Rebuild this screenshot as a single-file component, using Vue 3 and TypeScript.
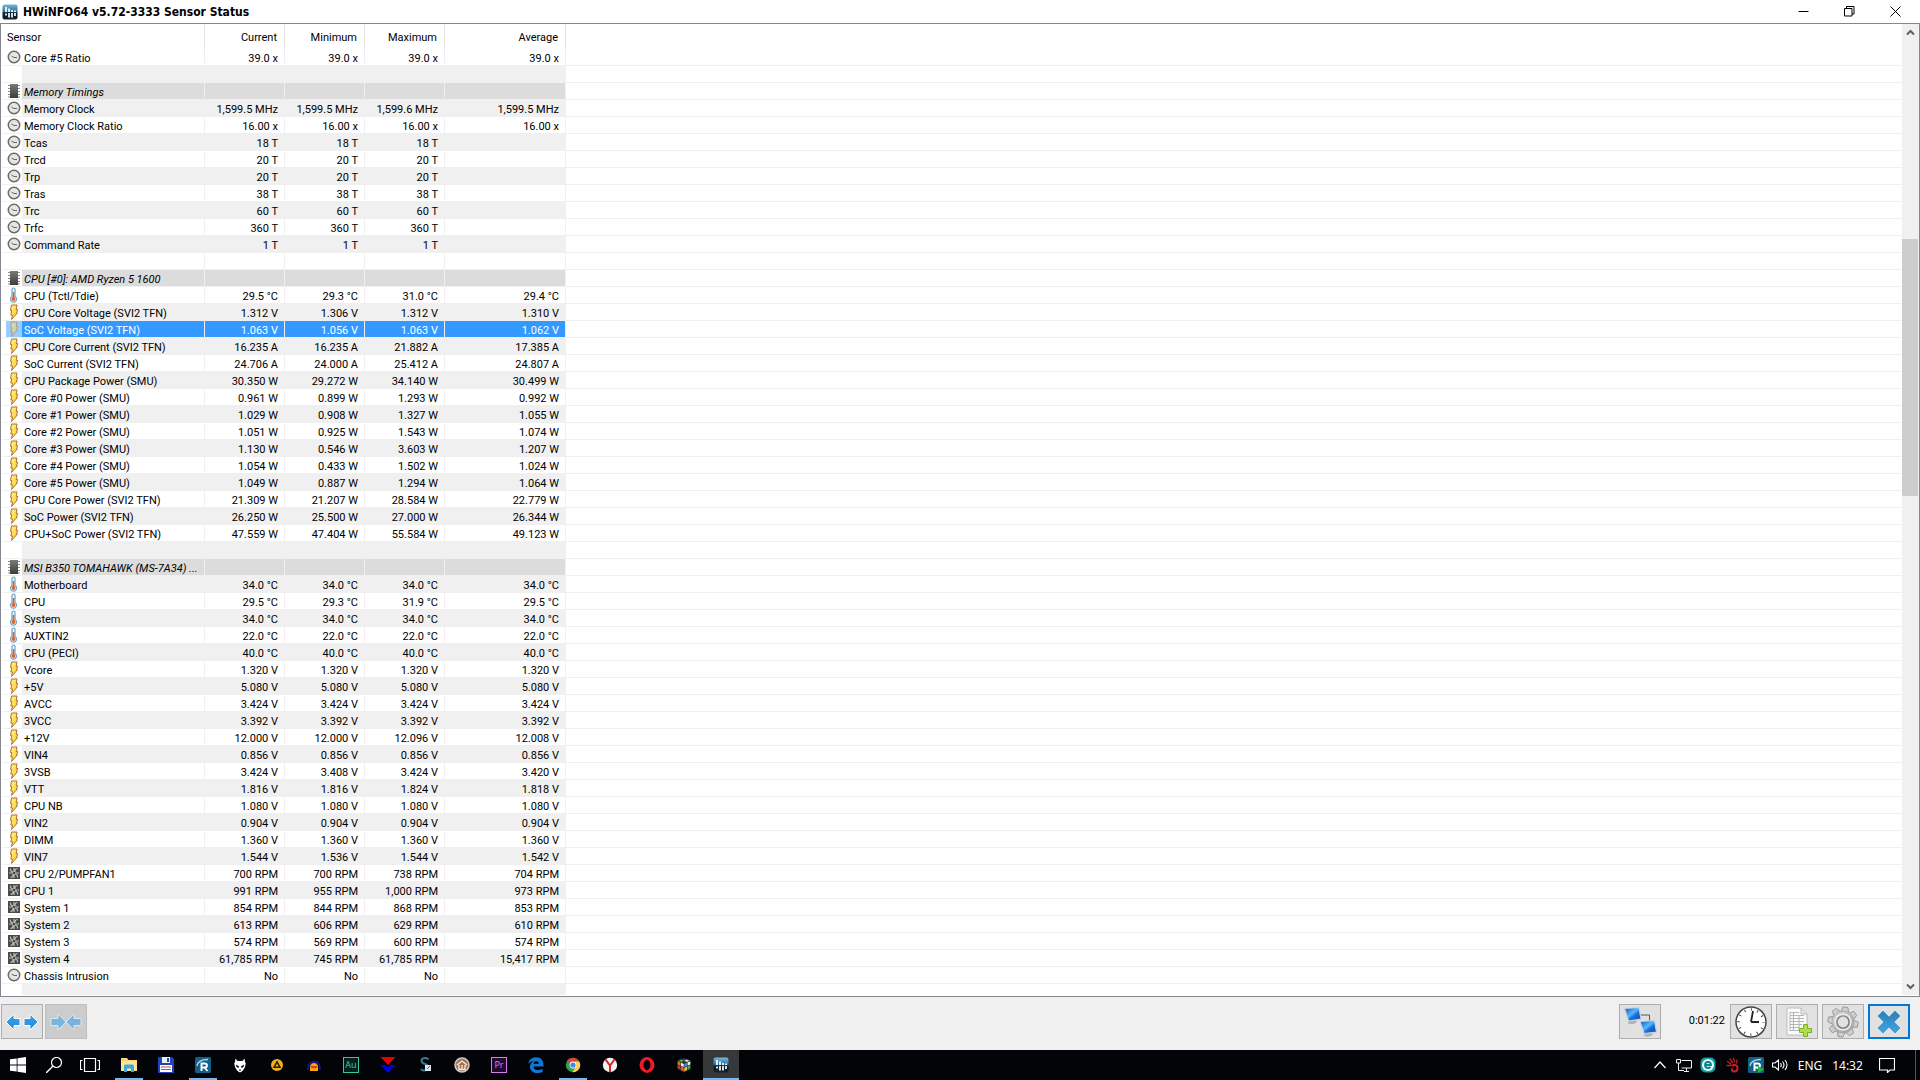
<script setup lang="ts">
interface Row {
  kind: 'clock' | 'chip' | 'temp' | 'bolt' | 'fan' | 'blank'
  name: string
  values: string[]
  selected?: boolean
}

const row = (kind: Row['kind'], name = '', values = ''): Row => ({
  kind,
  name,
  values: values ? values.split('|') : ['', '', '', ''],
})
const withUnit = (kind: Row['kind'], unit: string, name: string, values: string): Row =>
  row(kind, name, values.split(' ').map((v) => (v === '-' ? '' : `${v} ${unit}`)).join('|'))

const clock = (unit: string, name: string, values: string) => withUnit('clock', unit, name, values)
const temp = (name: string, values: string) => withUnit('temp', '°C', name, values)
const volt = (name: string, values: string) => withUnit('bolt', 'V', name, values)
const amp = (name: string, values: string) => withUnit('bolt', 'A', name, values)
const watt = (name: string, values: string) => withUnit('bolt', 'W', name, values)
const fan = (name: string, values: string) => withUnit('fan', 'RPM', name, values)

const rows: Row[] = [
  clock('x', 'Core #5 Ratio', '39.0 39.0 39.0 39.0'),
  row('blank'),
  row('chip', 'Memory Timings'),
  clock('MHz', 'Memory Clock', '1,599.5 1,599.5 1,599.6 1,599.5'),
  clock('x', 'Memory Clock Ratio', '16.00 16.00 16.00 16.00'),
  clock('T', 'Tcas', '18 18 18 -'),
  clock('T', 'Trcd', '20 20 20 -'),
  clock('T', 'Trp', '20 20 20 -'),
  clock('T', 'Tras', '38 38 38 -'),
  clock('T', 'Trc', '60 60 60 -'),
  clock('T', 'Trfc', '360 360 360 -'),
  clock('T', 'Command Rate', '1 1 1 -'),
  row('blank'),
  row('chip', 'CPU [#0]: AMD Ryzen 5 1600'),
  temp('CPU (Tctl/Tdie)', '29.5 29.3 31.0 29.4'),
  volt('CPU Core Voltage (SVI2 TFN)', '1.312 1.306 1.312 1.310'),
  { ...volt('SoC Voltage (SVI2 TFN)', '1.063 1.056 1.063 1.062'), selected: true },
  amp('CPU Core Current (SVI2 TFN)', '16.235 16.235 21.882 17.385'),
  amp('SoC Current (SVI2 TFN)', '24.706 24.000 25.412 24.807'),
  watt('CPU Package Power (SMU)', '30.350 29.272 34.140 30.499'),
  watt('Core #0 Power (SMU)', '0.961 0.899 1.293 0.992'),
  watt('Core #1 Power (SMU)', '1.029 0.908 1.327 1.055'),
  watt('Core #2 Power (SMU)', '1.051 0.925 1.543 1.074'),
  watt('Core #3 Power (SMU)', '1.130 0.546 3.603 1.207'),
  watt('Core #4 Power (SMU)', '1.054 0.433 1.502 1.024'),
  watt('Core #5 Power (SMU)', '1.049 0.887 1.294 1.064'),
  watt('CPU Core Power (SVI2 TFN)', '21.309 21.207 28.584 22.779'),
  watt('SoC Power (SVI2 TFN)', '26.250 25.500 27.000 26.344'),
  watt('CPU+SoC Power (SVI2 TFN)', '47.559 47.404 55.584 49.123'),
  row('blank'),
  row('chip', 'MSI B350 TOMAHAWK (MS-7A34) ...'),
  temp('Motherboard', '34.0 34.0 34.0 34.0'),
  temp('CPU', '29.5 29.3 31.9 29.5'),
  temp('System', '34.0 34.0 34.0 34.0'),
  temp('AUXTIN2', '22.0 22.0 22.0 22.0'),
  temp('CPU (PECI)', '40.0 40.0 40.0 40.0'),
  volt('Vcore', '1.320 1.320 1.320 1.320'),
  volt('+5V', '5.080 5.080 5.080 5.080'),
  volt('AVCC', '3.424 3.424 3.424 3.424'),
  volt('3VCC', '3.392 3.392 3.392 3.392'),
  volt('+12V', '12.000 12.000 12.096 12.008'),
  volt('VIN4', '0.856 0.856 0.856 0.856'),
  volt('3VSB', '3.424 3.408 3.424 3.420'),
  volt('VTT', '1.816 1.816 1.824 1.818'),
  volt('CPU NB', '1.080 1.080 1.080 1.080'),
  volt('VIN2', '0.904 0.904 0.904 0.904'),
  volt('DIMM', '1.360 1.360 1.360 1.360'),
  volt('VIN7', '1.544 1.536 1.544 1.542'),
  fan('CPU 2/PUMPFAN1', '700 700 738 704'),
  fan('CPU 1', '991 955 1,000 973'),
  fan('System 1', '854 844 868 853'),
  fan('System 2', '613 606 629 610'),
  fan('System 3', '574 569 600 574'),
  fan('System 4', '61,785 745 61,785 15,417'),
  row('clock', 'Chassis Intrusion', 'No|No|No|'),
  row('blank'),
]

interface Task {
  id: string
  label: string
  running?: boolean
  active?: boolean
}

const tasks: Task[] = [
  { id: 'folder', label: 'File Explorer', running: true },
  { id: 'floppy', label: 'Save tool' },
  { id: 'radeon', label: 'R', running: true },
  { id: 'alien', label: 'foobar2000' },
  { id: 'aimp', label: 'AIMP' },
  { id: 'audacity', label: 'Audacity' },
  { id: 'au', label: 'Audition' },
  { id: 'arrows', label: 'Sync' },
  { id: 'snake', label: 'S' },
  { id: 'home', label: 'Home' },
  { id: 'pr', label: 'Premiere' },
  { id: 'edge', label: 'Edge' },
  { id: 'chrome', label: 'Chrome', running: true },
  { id: 'yandex', label: 'Yandex' },
  { id: 'opera', label: 'Opera' },
  { id: 'cube', label: 'Cube' },
  { id: 'hwinfo', label: 'HWiNFO64', running: true, active: true },
]
const tray = ['up', 'net', 'eset', 'hand', 'radeon-small', 'volume']
const gearTeeth = [0, 45, 90, 135, 180, 225, 270, 315]
</script>

<template>
  <svg class="defs" aria-hidden="true">
    <defs>
      <linearGradient id="g-hw" x2="0" y2="1">
        <stop offset="0" stop-color="#7fb6d4" /><stop offset=".5" stop-color="#1b6f9f" /><stop offset=".55" stop-color="#0c1a24" /><stop offset="1" stop-color="#10222e" />
      </linearGradient>
      <linearGradient id="g-chip" x2="0" y2="1"><stop offset="0" stop-color="#7a7a7a" /><stop offset="1" stop-color="#3c3c3c" /></linearGradient>
      <linearGradient id="g-bolt" x2="1" y2="1"><stop offset="0" stop-color="#fff6a0" /><stop offset="1" stop-color="#ffc800" /></linearGradient>
      <linearGradient id="g-blue" x2="1" y2="1"><stop offset="0" stop-color="#0a50c0" /><stop offset=".45" stop-color="#58b8fc" /><stop offset=".6" stop-color="#1c70dc" /><stop offset="1" stop-color="#0a44a8" /></linearGradient>
      <linearGradient id="g-arrow" x2="0" y2="1"><stop offset="0" stop-color="#3fa4ea" /><stop offset="1" stop-color="#2488d8" /></linearGradient>
      <linearGradient id="g-gear" gradientUnits="userSpaceOnUse" x1="8" y1="2" x2="28" y2="30"><stop offset="0" stop-color="#dcdcdc" /><stop offset="1" stop-color="#989898" /></linearGradient>
      <linearGradient id="g-x" x2="0" y2="1"><stop offset="0" stop-color="#2a7fb8" /><stop offset="1" stop-color="#3fa6e0" /></linearGradient>
    </defs>

    <symbol id="i-clock" viewBox="0 0 16 16">
      <circle cx="8" cy="8" r="5.7" fill="#e6e6e6" stroke="#6a6a6a" stroke-width="1.500" />
      <path d="M5.500 7l2.500 1.500h3" fill="none" stroke="#666" stroke-width="1" />
    </symbol>
    <symbol id="i-chip" viewBox="0 0 16 16">
      <path d="M2 2.500h12M2 5.500h12M2 8.500h12M2 11.500h12M2 14h12" stroke="#8a8a8a" stroke-width="1.200" />
      <rect x="4" y="1" width="8" height="14" fill="url(#g-chip)" />
    </symbol>
    <symbol id="i-temp" viewBox="0 0 16 16">
      <path d="M6 2.500a1.500 1.500 0 0 1 3 0v7a3 3 0 1 1-3 0z" fill="#f4faff" stroke="#6aa2c8" stroke-width="1.200" />
      <path d="M7.500 5v7" stroke="#d8642c" stroke-width="1.600" /><circle cx="7.500" cy="12" r="1.900" fill="#e0622a" />
    </symbol>
    <symbol id="i-bolt" viewBox="0 0 16 16">
      <path d="M5.500 1h5.500l-.8 4.500h1.500L10.500 9h.8L5.500 15.500l1-4.500H4.800l1-4.500H4.500z" fill="url(#g-bolt)" stroke="#b07030" stroke-width="1" />
    </symbol>
    <symbol id="i-fan" viewBox="0 0 16 16">
      <rect x="2" y="2" width="12" height="12" fill="#4a4a4a" />
      <path d="M7 7Q4 6.500 4.500 3.500M9 7q-.5-3 2.500-3.500M9 9q3 .5 2.500 3.500M7 9q.5 3-2.500 3.500M8 3v4M8 9v4M3 8h4M9 8h4" fill="none" stroke="#bcbcbc" stroke-width="1.200" />
    </symbol>
    <symbol id="i-hwinfo" viewBox="0 0 16 16">
      <rect x=".5" y=".5" width="15" height="15" rx="2" fill="url(#g-hw)" />
      <path d="M4 3v5M7 4.500v3.500M10 6v2M13 6.500v1.500M4 9.500v2M7 9v4.500M10 9v4.500M13 9v3" stroke="#fff" stroke-width="1.700" />
    </symbol>

    <symbol id="i-folder" viewBox="0 0 16 16">
      <path d="M0 1h6l1.500 2H16v11H0z" fill="#f7d774" /><path d="M0 4h16v10H0z" fill="#fbe59a" />
      <path d="M3 15V9q0-1.500 1.500-1.500h7Q13 7.500 13 9v6h-3v-3.500H6V15z" fill="#3fa9dc" />
    </symbol>
    <symbol id="i-floppy" viewBox="0 0 16 16">
      <path d="M1 0h13l2 2v14H0V1z" fill="#2144b8" /><path d="M4 0h8v6H4z" fill="#e8eef8" /><path d="M9 1h2v4H9z" fill="#2144b8" />
      <path d="M2 8h12v7H2z" fill="#fff" /><path d="M3 10h10M3 12.500h10" stroke="#d04848" stroke-width="1.200" />
    </symbol>
    <symbol id="i-radeon" viewBox="0 0 16 16">
      <rect width="16" height="16" rx="1.500" fill="#125f88" /><path d="M2 9Q3 2.500 13 2.500" fill="none" stroke="#a8d8ec" stroke-width="1.300" />
      <path d="M6.500 14V6.500h3q2.500 0 2.500 2t-2.500 2h-3M9.500 10.500l3 3.500" fill="none" stroke="#fff" stroke-width="1.900" />
    </symbol>
    <symbol id="i-radeon-small" viewBox="0 0 16 16"><use href="#i-radeon" /><path d="M10 9l6 3.500-6 3.500z" fill="#20b830" /></symbol>
    <symbol id="i-alien" viewBox="0 0 16 16">
      <path d="M3.500 1.500L5.500 4h5l2-2.500.5 3.500.8 1.500-1 4L10.500 14 8 15.500 5.500 14l-2.300-3.500-1-4L3 5z" fill="#fff" /><path d="M4 7.500l3 2-.5 1.500-2-1zM12 7.500l-3 2 .5 1.500 2-1z" fill="#000" /><path d="M7 13h2" stroke="#000" />
    </symbol>
    <symbol id="i-aimp" viewBox="0 0 16 16"><circle cx="8" cy="8" r="6" fill="#f2b01e" /><path d="M8 4.800l3 5.500H5z" fill="none" stroke="#2a1c00" stroke-width="1.500" /></symbol>
    <symbol id="i-audacity" viewBox="0 0 16 16">
      <path d="M2.500 13C-.5 2 16.500 2 13.500 13" fill="none" stroke="#14148c" stroke-width="2" />
      <path d="M4 14V9q1-3 4-3t4 3v5z" fill="#f8a818" /><path d="M5 9.500q3 1.500 6 0" fill="none" stroke="#e83810" stroke-width="2" />
    </symbol>
    <symbol id="i-arrows" viewBox="0 0 16 16"><path d="M.5 0h15L8 8z" fill="#e80000" /><path d="M.5 8H5l3 2 3-2h4.500L8 16z" fill="#0000e0" /></symbol>
    <symbol id="i-snake" viewBox="0 0 16 16">
      <path d="M11.500 2.500Q10 .8 7.500 1 4.500 1.300 4.500 3.800 4.500 6 8 7t3 4q-.5 2.500-4 2.500-2 0-3-1.500" fill="none" stroke="#347a9c" stroke-width="2" /><path d="M8 8h6v6H8z" fill="#dde8ec" /><path d="M10 12l3-3" stroke="#347a9c" />
    </symbol>
    <symbol id="i-home" viewBox="0 0 16 16">
      <circle cx="8" cy="8" r="7" fill="#a47450" stroke="#ccc" stroke-width="1.500" /><path d="M3 8l5-4 5 4M5 8v4.500h6V8M8 8v4" fill="none" stroke="#f4ece4" stroke-width="1.300" />
    </symbol>
    <symbol id="i-edge" viewBox="0 0 16 16">
      <path d="M.5 7C1 2.500 4 .3 8 .3c5 0 7.500 3.500 7.500 7.700v1.500H5.500c0 4 5.500 4.500 9 2.300v3.200C8 18 2 15 2 9.800 2 7 3.500 5 6 4 3.500 4.200 1.500 5.500.5 7zm5-.2h5.500C11 3.400 5.700 3.200 5.500 6.800z" fill="#1078d4" />
    </symbol>
    <symbol id="i-chrome" viewBox="0 0 16 16">
      <circle cx="8" cy="8" r="7.200" fill="#30a050" /><path d="M8 8L1.800 4.400A7.200 7.200 0 0 1 14.200 4.400H8z" fill="#dc4434" />
      <path d="M14.200 4.400A7.200 7.200 0 0 1 7.500 15.200L11 9.500 10 4.400z" fill="#fcd048" /><circle cx="8" cy="8" r="3.400" fill="#fff" /><circle cx="8" cy="8" r="2.600" fill="#4684ec" />
    </symbol>
    <symbol id="i-yandex" viewBox="0 0 16 16"><circle cx="8" cy="8" r="7.200" fill="#f4f4f4" /><path d="M3.500 2.500l4.500 6 4.500-6M8 8v7" fill="none" stroke="#e02020" stroke-width="2" /></symbol>
    <symbol id="i-opera" viewBox="0 0 16 16"><ellipse cx="8" cy="8" rx="5.500" ry="6" fill="none" stroke="#e81c28" stroke-width="4" /><ellipse cx="8" cy="8" rx="2.800" ry="5" fill="#000" /></symbol>
    <symbol id="i-cube" viewBox="0 0 16 16">
      <path d="M8 1l6.500 2.500V12L8 15.500 1.500 12V3.500z" fill="#333" />
      <path d="M1.700 4.500l2.700 1v3l-2.700-1z" fill="#e87820" /><path d="M5 5.800l2.700 1.200v3L5 8.800z" fill="#f4f4f4" /><path d="M1.700 8.200l2.700 1v3l-2.700-1.200z" fill="#d03838" /><path d="M5 9.500l2.700 1.200v3.800L5 13z" fill="#e86030" />
      <path d="M8.300 7L11 5.800v3L8.300 10z" fill="#4088e0" /><path d="M11.600 5.500l2.700-1v3l-2.700 1z" fill="#f4f4f4" /><path d="M8.300 10.700L11 9.500V13l-2.700 1.500z" fill="#f0c030" /><path d="M11.600 9.200l2.700-1v3.300l-2.700 1.300z" fill="#38b050" />
      <path d="M2.500 3.700l2.700-1.200L8 3.700 5 5z" fill="#48b058" /><path d="M8 3.700l2.700-1.200 2.800 1.200L11 5z" fill="#d8d8d8" />
    </symbol>

    <symbol id="i-up" viewBox="0 0 16 16"><path d="M2.500 11L8 5l5.500 6" fill="none" stroke="#fff" stroke-width="1.200" /></symbol>
    <symbol id="i-net" viewBox="0 0 16 16">
      <path d="M5.500 3.500h10v7.500H5.500M8 14.500h5M10.500 11v3.500M.5 2.500h4v3.500h-4zM2.500 6v7.500H8" fill="none" stroke="#f0f0f0" />
    </symbol>
    <symbol id="i-eset" viewBox="0 0 16 16">
      <rect x=".5" y=".5" width="15" height="15" rx="5" fill="#14a0a4" /><circle cx="8" cy="8" r="6" fill="#e8ffff" />
      <path d="M5 8h6q0-3-3-3T5 8t3 3q1.500 0 2.500-1" fill="none" stroke="#0c8088" stroke-width="1.800" />
    </symbol>
    <symbol id="i-hand" viewBox="0 0 16 16">
      <path d="M7 7L3.500 4.500M8.500 5.500L6 2M10.500 5L9.500 1.500M12.500 6l.5-3M7 8.500L3 8.500" fill="none" stroke="#c81c24" stroke-width="1.300" stroke-linecap="round" />
      <path d="M8 8.500q5.500-1.500 5.500 2.500 0 3.500-3.500 3.500-2.500 0-2-3" fill="none" stroke="#d81c24" stroke-width="2" />
    </symbol>
    <symbol id="i-volume" viewBox="0 0 16 16"><path d="M.5 6h2.500l3.500-3v10L3 10H.5zM8.500 6q1.500 2 0 4M10.500 4.500q3 3.500 0 7M13 3q4 5 0 10" fill="none" stroke="#fff" stroke-width="1.100" /></symbol>
  </svg>

  <div class="window">
    <header class="titlebar">
      <svg class="ico"><use href="#i-hwinfo" /></svg>
      <h1>HWiNFO64 v5.72-3333 Sensor Status</h1>
      <button aria-label="Minimize"><svg viewBox="0 0 11 11"><path d="M.5 5.500h10" /></svg></button>
      <button aria-label="Restore"><svg viewBox="0 0 11 11"><path d="M.5 2.500h7.500v7.500H.5zM2.500 2.500V.5H10v7.500H8" /></svg></button>
      <button aria-label="Close"><svg viewBox="0 0 11 11"><path d="M.5 .5l10 10M10.500 .5l-10 10" /></svg></button>
    </header>

    <main class="list">
      <div class="view">
        <table>
          <colgroup>
            <col class="c-icon" /><col class="c-name" /><col class="c-val" /><col class="c-val" /><col class="c-val" /><col class="c-avg" /><col />
          </colgroup>
          <thead>
            <tr>
              <th colspan="2" scope="col" class="first">Sensor</th>
              <th scope="col">Current</th>
              <th scope="col">Minimum</th>
              <th scope="col">Maximum</th>
              <th scope="col">Average</th>
              <td></td>
            </tr>
          </thead>
          <tbody>
            <tr v-for="(r, i) in rows" :key="i" :class="{ alt: i % 2 === 1, group: r.kind === 'chip', selected: r.selected }">
              <td class="icon"><svg v-if="r.kind !== 'blank'" class="ico"><use :href="`#i-${r.kind}`" /></svg></td>
              <th scope="row">{{ r.name }}</th>
              <td v-for="(v, j) in r.values" :key="j" class="val">{{ v }}</td>
              <td class="rest"></td>
            </tr>
          </tbody>
        </table>
      </div>
      <div class="scrollbar">
        <button aria-label="Scroll up"><svg viewBox="0 0 9 7"><path d="M1 5.500l3.500-3.500L8 5.500" /></svg></button>
        <div class="track"><div class="thumb"></div></div>
        <button aria-label="Scroll down"><svg viewBox="0 0 9 7"><path d="M1 1.500L4.500 5 8 1.500" /></svg></button>
      </div>
    </main>

    <footer class="toolbar">
      <button aria-label="Expand columns">
        <svg viewBox="0 0 36 24"><g fill="url(#g-arrow)" stroke="#fff"><path d="M2 12l8-8v4.500h6v7h-6V20z" /><path d="M34 12l-8-8v4.500h-6v7h6V20z" /></g></svg>
      </button>
      <button aria-label="Shrink columns" disabled>
        <svg viewBox="0 0 36 24"><g fill="#78b4e0" stroke="#dce6ee"><path d="M18 12l-8-8v4.500H3v7h7V20z" /><path d="M18 12l8-8v4.500h7v7h-7V20z" /></g></svg>
      </button>
      <span class="spring"></span>
      <button aria-label="Remote monitoring">
        <svg viewBox="0 0 36 32">
          <path d="M18 9h9.500v8" fill="none" stroke="#555" />
          <path d="M7 13l7-.5 1 3.500q-4 3.500-9 1.500z" fill="#b0b4b8" /><path d="M2.500 2.500l14.500-1 2 11.500-12.500 2z" fill="url(#g-blue)" stroke="#ccd4da" stroke-width="1.200" />
          <path d="M23 26l7-.5 1 3q-4 3.500-9 1.500z" fill="#b0b4b8" /><path d="M18 15.500l14.500-1 2 11.500-12.500 1.500z" fill="url(#g-blue)" stroke="#ccd4da" stroke-width="1.200" />
        </svg>
      </button>
      <time>0:01:22</time>
      <button aria-label="Reset timer">
        <svg viewBox="0 0 36 32">
          <circle cx="18" cy="16" r="15" fill="#fff" stroke="#444" stroke-width="1.500" />
          <circle cx="18" cy="16" r="12.500" fill="none" stroke="#444" stroke-width="2.500" stroke-dasharray="1 5.545" stroke-dashoffset=".5" />
          <path d="M18 16l2-11M18 16h8" fill="none" stroke="#222" stroke-width="1.800" />
        </svg>
      </button>
      <button aria-label="Start logging">
        <svg viewBox="0 0 36 32">
          <path d="M8 2h14l6 6v21H8z" fill="#fbfbfb" stroke="#bbb" /><path d="M22 2v6h6" fill="#e4e4e4" stroke="#bbb" />
          <path d="M11 6.500h9M11 9.500h14M11 12.500h14M11 15.500h14M11 18.500h12M11 21.500h10M11 24.500h10M14.500 6v19M20 9v16M11 6v19" stroke="#b4b8b4" fill="none" />
          <path d="M24.500 18.500h4v4h4v4h-4v4h-4v-4h-4v-4h4z" fill="#b4dc50" stroke="#7cb020" />
        </svg>
      </button>
      <button aria-label="Settings">
        <svg viewBox="0 0 36 32">
          <g fill="url(#g-gear)">
            <path v-for="a in gearTeeth" :key="a" d="M14 7l1.500-6h5l1.500 6z" :transform="`rotate(${a + 10} 18 16)`" stroke="#8c8c8c" stroke-width=".8" />
          </g>
          <circle cx="18" cy="16" r="11" fill="url(#g-gear)" stroke="#a0a0a0" stroke-width=".6" />
          <circle cx="18" cy="16" r="8" fill="none" stroke="#ececec" stroke-width="1.500" />
          <circle cx="18" cy="16" r="6" fill="#e1e1e1" stroke="#787878" stroke-width="1.200" />
        </svg>
      </button>
      <button aria-label="Close window" class="focused">
        <svg viewBox="0 0 36 32"><path d="M12 5l6 6 6-6 5 5-6 6 6 6-5 5-6-6-6 6-5-5 6-6-6-6z" fill="url(#g-x)" stroke="#2a88c4" stroke-width=".6" /></svg>
      </button>
    </footer>

    <nav class="taskbar">
      <button aria-label="Start" class="sys"><svg viewBox="0 0 16 16" class="ico"><path d="M0 2.300l6.700-.9v6.200H0zM7.500 1.200L16 0v7.600H7.500zM0 8.400h6.700v6.200L0 13.700zM7.500 8.400H16V16l-8.500-1.200z" fill="#fff" /></svg></button>
      <button aria-label="Search" class="sys"><svg viewBox="0 0 16 16" class="ico"><circle cx="10.500" cy="5.500" r="5" fill="none" stroke="#fff" stroke-width="1.200" /><path d="M7 9L0 16" stroke="#fff" stroke-width="1.400" /></svg></button>
      <button aria-label="Task view" class="sys view-btn"><svg viewBox="0 0 20 16" class="wide"><path d="M4.500 1.500h11v13h-11zM2.500 3.500h-2v9h2M17.500 3.500h2v9h-2" fill="none" stroke="#fff" stroke-width="1.200" /></svg></button>
      <button v-for="t in tasks" :key="t.id" :aria-label="t.label" :class="['task', { running: t.running, active: t.active }]">
        <span v-if="t.id === 'au' || t.id === 'pr'" :class="['adobe', t.id]">{{ t.id === 'au' ? 'Au' : 'Pr' }}</span>
        <svg v-else class="ico"><use :href="`#i-${t.id}`" /></svg>
      </button>
      <span class="spring"></span>
      <button v-for="t in tray" :key="t" :aria-label="t" class="tray"><svg class="ico"><use :href="`#i-${t}`" /></svg></button>
      <button class="lang">ENG</button>
      <button class="time">14:32</button>
      <button class="action" aria-label="Notifications"><svg viewBox="0 0 16 16" class="ico"><path d="M.5 1.500h15v11.500h-4.500l-2.500 2.500V13h-8z" fill="none" stroke="#fff" stroke-width="1.200" /></svg></button>
      <button class="peek" aria-label="Show desktop"></button>
    </nav>
  </div>
</template>

<style>
body {
  margin: 0;
}
</style>

<style scoped>
.defs {
  position: absolute;
  width: 0;
  height: 0;
}
.window {
  display: flex;
  flex-direction: column;
  height: 100vh;
  background: #f0f0f0;
  color: #000;
  font-family: Roboto, "Noto Sans", sans-serif;
  font-size: 11px;
}
button {
  display: flex;
  align-items: center;
  justify-content: center;
  flex: none;
  box-sizing: border-box;
  margin: 0;
  padding: 0;
  border: 0;
  background: none;
  font: inherit;
  color: inherit;
}
.ico {
  display: block;
  flex: none;
  width: 16px;
  height: 16px;
}
.spring {
  flex: 1;
}
.titlebar {
  display: flex;
  align-items: center;
  flex: none;
  height: 23px;
  padding: 0 2px;
  background: #fff;
}
.titlebar h1 {
  flex: 1;
  margin: 0 0 0 5px;
  font-family: "DejaVu Sans Condensed", "DejaVu Sans", sans-serif;
  font-size: 12px;
  line-height: 22px;
  font-weight: 700;
}
.titlebar button {
  width: 46px;
  height: 21px;
}
.titlebar button svg {
  width: 11px;
  height: 11px;
  fill: none;
  stroke: #000;
}
.list {
  display: flex;
  flex: 1;
  min-height: 0;
  padding: 0 0 1px 1px;
  border: 1px solid #828790;
  background: #fff;
}
.view {
  flex: 1;
  min-width: 0;
  overflow: hidden;
}
table {
  width: 100%;
  table-layout: fixed;
  border-spacing: 0;
}
.c-icon {
  width: 20px;
}
.c-name {
  width: 183px;
}
.c-val {
  width: 80px;
}
.c-avg {
  width: 121px;
}
th,
td {
  padding: 0;
  font-weight: 400;
  white-space: nowrap;
}
thead th {
  height: 23px;
  padding-top: 2px;
  padding-right: 7px;
  border-right: 1px solid #e5e5e5;
  text-align: right;
}
thead .first {
  padding-left: 5px;
  text-align: left;
}
tbody th,
tbody td {
  height: 12px;
  padding-top: 4px;
  line-height: 12px;
  border-bottom: 1px solid #f0f0f0;
}
tbody th,
.val {
  border-right: 1px solid #f0f0f0;
}
tbody th {
  padding-left: 2px;
  text-align: left;
}
tbody .icon {
  height: 16px;
  padding-top: 0;
  padding-left: 4px;
}
.val {
  padding-right: 6px;
  text-align: right;
}
.alt th,
.alt .val {
  background: #f0f0f0;
}
.group th,
.group .val {
  background: #dcdcdc;
}
.group th {
  font-style: italic;
}
.selected th,
.selected .val {
  background: #3399ff;
  color: #fff;
}
.selected .icon {
  background: linear-gradient(90deg, #fff 4px, #9accff 4px);
}
.selected .icon svg {
  opacity: 0.5;
}
.scrollbar {
  display: flex;
  flex-direction: column;
  flex: none;
  width: 17px;
  background: #f0f0f0;
}
.scrollbar button {
  height: 17px;
}
.scrollbar svg {
  width: 9px;
  height: 7px;
  fill: none;
  stroke: #606060;
  stroke-width: 2;
}
.track {
  display: flex;
  flex-direction: column;
  flex: 1;
}
.track::before {
  content: "";
  flex: 198;
}
.track::after {
  content: "";
  flex: 482;
}
.thumb {
  flex: 257;
  margin-right: 1px;
  background: #cdcdcd;
}
.toolbar {
  display: flex;
  align-items: center;
  flex: none;
  gap: 4px;
  height: 53px;
  padding: 0 10px 4px 1px;
  box-sizing: border-box;
}
.toolbar button {
  width: 42px;
  height: 35px;
  border: 1px solid #adadad;
  background: #e1e1e1;
}
.toolbar button:disabled {
  margin-left: -2px;
  border-color: #bfbfbf;
  background: #cccccc;
}
.toolbar .focused {
  border: 2px solid #0078d7;
}
.toolbar svg {
  flex: none;
  width: 36px;
  height: 32px;
}
.toolbar time {
  box-sizing: border-box;
  width: 61px;
  padding: 0 1px 2px 0;
  text-align: right;
}
.taskbar {
  display: flex;
  flex: none;
  height: 30px;
  background: #020408;
  color: #fff;
  font-family: "Noto Sans", sans-serif;
  font-size: 12px;
}
.sys {
  width: 36px;
}
.view-btn {
  margin-right: 3px;
}
.wide {
  width: 20px;
  height: 16px;
}
.task {
  width: 36px;
  margin-right: 1px;
  border: solid transparent;
  border-width: 2px 4px;
}
.running {
  border-bottom-color: #76b9ed;
  border-left-width: 0;
  border-right-width: 0;
  width: 28px;
  margin: 0 5px 0 4px;
}
.active {
  width: 36px;
  margin: 0 1px 0 0;
  background: #36383a;
  background-clip: border-box;
  border-top-color: #36383a;
}
.adobe {
  box-sizing: border-box;
  width: 16px;
  height: 16px;
  border: 1px solid #38c8a0;
  background: #04201c;
  color: #38c8a0;
  font-size: 9px;
  line-height: 14px;
  text-align: center;
}
.adobe.pr {
  border-color: #d080e8;
  background: #240830;
  color: #d080e8;
}
.tray {
  width: 24px;
}
.lang {
  width: 36px;
}
.time {
  width: 39px;
}
.action {
  width: 40px;
}
.peek {
  width: 5px;
  margin-left: 8px;
  border-left: 1px solid #555;
}
</style>
